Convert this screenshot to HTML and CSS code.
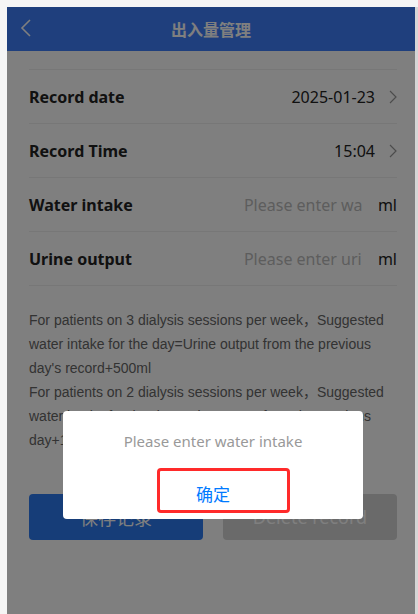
FILE: index.html
```html
<!DOCTYPE html>
<html lang="zh-CN">
<head>
    <meta charset="UTF-8">
    <meta name="viewport" content="width=device-width, initial-scale=1.0">
    <title>出入量管理</title>
    <link rel="stylesheet" href="styles.css">
</head>
<body>

    <div class="pantalla">
        <div class="cabecera">
            <span class="volver">
                <svg width="12" height="18" viewBox="0 0 12 18"><path d="M10 1 L2 9 L10 17" fill="none" stroke="#fff" stroke-width="1.6"/></svg>
            </span>
            <h1>出入量管理</h1>
        </div>

        <div class="formulario">
            <div class="fila">
                <span class="etiqueta">Record date</span>
                <span class="valor">2025-01-23</span>
                <span class="flecha"><svg width="8" height="14" viewBox="0 0 8 14"><path d="M1 1 L7 7 L1 13" fill="none" stroke="#999" stroke-width="1.2"/></svg></span>
            </div>
            <div class="fila">
                <span class="etiqueta">Record Time</span>
                <span class="valor">15:04</span>
                <span class="flecha"><svg width="8" height="14" viewBox="0 0 8 14"><path d="M1 1 L7 7 L1 13" fill="none" stroke="#999" stroke-width="1.2"/></svg></span>
            </div>
            <div class="fila">
                <span class="etiqueta">Water intake</span>
                <input class="entrada" type="text" placeholder="Please enter water intake">
                <span class="unidad">ml</span>
            </div>
            <div class="fila">
                <span class="etiqueta">Urine output</span>
                <input class="entrada" type="text" placeholder="Please enter urine output">
                <span class="unidad">ml</span>
            </div>
        </div>

        <div class="nota">
            <p>For patients on 3 dialysis sessions per week，Suggested water intake for the day=Urine output from the previous day's record+500ml</p>
            <p>For patients on 2 dialysis sessions per week，Suggested water intake for the day=Urine output from the previous day+1000ml</p>
        </div>

        <div class="botones">
            <button class="boton guardar">保存记录</button>
            <button class="boton borrar">Delete record</button>
        </div>

        <div class="mascara"></div>

        <div class="dialogo">
            <div class="mensaje">Please enter water intake</div>
            <button class="confirmar">确定</button>
            <!-- marco rojo de la captura -->
            <div class="marca"></div>
        </div>
    </div>

</body>
</html>
```

FILE: styles.css
```css
html, body {
    margin: 0;
    height: 100%;
}

body {
    font-family: "Noto Sans", "Noto Sans CJK SC", sans-serif;
    background-color: #f5f5f5;
    display: flex;
    padding: 7px 0 0 7px;
    box-sizing: border-box;
    overflow: hidden;
}

.pantalla {
    position: relative;
    width: 408px;
    height: 607px;
    background: #fff;
    border-right: 3px solid #d6d6d6;
    overflow: hidden;
}

.cabecera {
    height: 44px;
    background: #3e7efa;
    display: flex;
    align-items: center;
    justify-content: center;
    position: relative;
}

.cabecera h1 {
    margin: 0;
    font-size: 16px;
    font-weight: bold;
    color: #fff;
    font-family: "Noto Sans CJK SC", sans-serif;
}

.cabecera .volver {
    position: absolute;
    left: 13px;
    top: 12px;
    display: flex;
}

.formulario {
    margin: 18px 18px 0 22px;
    border-top: 1px solid #eee;
}

.fila {
    height: 53px;
    display: flex;
    align-items: center;
    border-bottom: 1px solid #eee;
    font-size: 16px;
}

.fila .etiqueta {
    font-weight: bold;
    color: #222;
    flex: 1;
}

.fila .valor {
    color: #222;
}

.fila .flecha {
    display: flex;
    margin-left: 14px;
}

.fila .entrada {
    width: 118px;
    border: none;
    outline: none;
    padding: 0;
    font-family: inherit;
    font-size: 16px;
    color: #222;
    background: transparent;
}

.fila .entrada::placeholder {
    color: #bbb;
}

.fila .unidad {
    margin-left: 16px;
    color: #222;
}

.nota {
    margin: 22px 18px 0 22px;
    font-family: "Liberation Sans", "Noto Sans CJK SC", sans-serif;
    font-size: 14px;
    line-height: 24px;
    color: #666;
}

.nota p {
    margin: 0;
}

.botones {
    display: flex;
    gap: 20px;
    margin: 42px 18px 0 22px;
}

.boton {
    flex: 1;
    height: 46px;
    border: none;
    border-radius: 4px;
    font-size: 18px;
    font-family: "Noto Sans", "Noto Sans CJK SC", sans-serif;
    color: #fff;
}

.boton.guardar {
    background: #2c7af0;
}

.boton.borrar {
    background: #d4d4d4;
    color: #fff;
}

.mascara {
    position: absolute;
    inset: 0;
    background: rgba(0, 0, 0, 0.5);
}

.dialogo {
    position: absolute;
    left: 56px;
    top: 404px;
    width: 300px;
    height: 108px;
    background: #fff;
    border-radius: 4px;
    text-align: center;
    display: flex;
    flex-direction: column;
}

.dialogo .mensaje {
    padding-top: 19px;
    font-size: 15px;
    line-height: 22px;
    color: #999;
}

.dialogo .confirmar {
    flex: 1;
    margin-top: 16px;
    border: none;
    background: none;
    color: #007aff;
    font-size: 17px;
    font-family: "Noto Sans CJK SC", sans-serif;
}

.dialogo .marca {
    position: absolute;
    left: 94px;
    top: 57px;
    width: 133px;
    height: 45px;
    border: 3px solid #ff2a2a;
    border-radius: 4px;
    box-sizing: border-box;
}
```
